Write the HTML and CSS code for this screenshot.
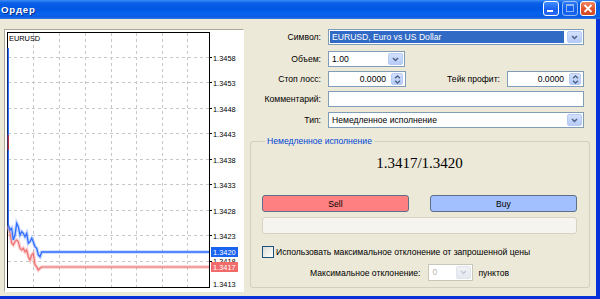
FILE: index.html
```html
<!DOCTYPE html>
<html lang="ru">
<head>
  <meta charset="UTF-8">
  <title>Ордер</title>
  <link rel="stylesheet" href="styles.css">
</head>
<body>
  <div class="window">
    <!-- Title bar -->
    <div class="titlebar">
      <span class="title">Ордер</span>
      <div class="caption-buttons">
        <span class="cap-btn">
          <svg width="14" height="13" viewBox="0 0 14 13"><rect x="3" y="8" width="6" height="2" fill="#fff"/></svg>
        </span>
        <span class="cap-btn disabled">
          <svg width="14" height="13" viewBox="0 0 14 13"><rect x="3.5" y="2.5" width="7" height="7" fill="none" stroke="#fff"/><rect x="3" y="2" width="8" height="2" fill="#fff"/></svg>
        </span>
        <span class="cap-btn close">
          <svg width="14" height="13" viewBox="0 0 14 13"><path d="M3.5 3l7 7M10.5 3l-7 7" stroke="#fff" stroke-width="1.8"/></svg>
        </span>
      </div>
    </div>

    <div class="client">
      <!-- Tick chart -->
      <div class="chart-panel">
        <svg class="chart" width="238" height="261" viewBox="0 0 238 261">
          <g fill="none" stroke="#c8c8c8" stroke-dasharray="3 3">
            <path d="M3 27.5H204M3 52.5H204M3 78.5H204M3 103.5H204M3 129.5H204M3 154.5H204M3 180.5H204M3 205.5H204M3 231.5H204"/>
            <path d="M28.5 3V257M54.5 3V257M80.5 3V257M106.5 3V257M131.5 3V257M157.5 3V257M182.5 3V257"/>
          </g>
          <rect x="2.5" y="2.5" width="202" height="255" fill="none" stroke="#000"/>
          <path d="M204 27.5h3M204 52.5h3M204 78.5h3M204 103.5h3M204 129.5h3M204 154.5h3M204 180.5h3M204 205.5h3M204 231.5h3" stroke="#000"/>

          <text class="symbol" x="4" y="11">EURUSD</text>

          <g class="axis">
            <text x="208" y="30.5">1.3458</text>
            <text x="208" y="55.5">1.3453</text>
            <text x="208" y="81.5">1.3448</text>
            <text x="208" y="106.5">1.3443</text>
            <text x="208" y="132.5">1.3438</text>
            <text x="208" y="157.5">1.3433</text>
            <text x="208" y="183.5">1.3428</text>
            <text x="208" y="208.5">1.3423</text>
            <text x="208" y="233.5">1.3418</text>
            <text x="208" y="257">1.3413</text>
          </g>

          <!-- ask / bid history -->
          <path d="M3.3 18V195" stroke="#2f6fff" stroke-width="1.4"/>
          <path d="M3.3 105V120" stroke="#b0304a" stroke-width="1.4"/>
          <path d="M3.3 196.7L5 203.3L6.7 213.3L8.3 215L10 211.7L11.7 210L13.3 211.7L15 218.3L16.7 220L18.3 218.3L20 221.7L21.7 220L23.3 226.7L25 230L26.7 225L28.3 223.3L30 235L31.7 236.7L33.3 240L35 238.3L36.7 237H204" fill="none" stroke="#f4a0a0" stroke-width="3.5" stroke-opacity=".5"/>
          <path d="M3.3 196.7L5 203.3L6.7 213.3L8.3 215L10 211.7L11.7 210L13.3 211.7L15 218.3L16.7 220L18.3 218.3L20 221.7L21.7 220L23.3 226.7L25 230L26.7 225L28.3 223.3L30 235L31.7 236.7L33.3 240L35 238.3L36.7 237H204" fill="none" stroke="#f07070" stroke-width="1.2"/>
          <path d="M3.3 195L5 200L6.7 198.3L8.3 210L10 205L11.7 193.3L13.3 196.7L15 205L16.7 201.7L18.3 203.3L20 206.7L21.7 203.3L23.3 213.3L25 211.7L26.7 208.3L28.3 211.7L30 216.7L31.7 218.3L33.3 225L35 226.7L36.7 222H204" fill="none" stroke="#90b0ff" stroke-width="3.5" stroke-opacity=".5"/>
          <path d="M3.3 195L5 200L6.7 198.3L8.3 210L10 205L11.7 193.3L13.3 196.7L15 205L16.7 201.7L18.3 203.3L20 206.7L21.7 203.3L23.3 213.3L25 211.7L26.7 208.3L28.3 211.7L30 216.7L31.7 218.3L33.3 225L35 226.7L36.7 222H204" fill="none" stroke="#2f6fff" stroke-width="1.3"/>

          <rect x="206" y="217" width="27" height="10" fill="#1a62f0"/>
          <text class="tag" x="208" y="225">1.3420</text>
          <rect x="206" y="232" width="27" height="10" fill="#f26b6b"/>
          <text class="tag" x="208" y="240">1.3417</text>
        </svg>
      </div>

      <!-- Order form -->
      <div class="order-panel">
        <div class="form">
          <div class="row row-symbol">
            <label>Символ:</label>
            <div class="combo wide selected">
              <span class="value">EURUSD, Euro vs US Dollar</span>
              <span class="drop"><svg width="7" height="5" viewBox="0 0 7 5"><path d="M1 1l2.5 2.5L6 1" fill="none" stroke="#4d6185" stroke-width="1.5"/></svg></span>
            </div>
          </div>
          <div class="row">
            <label>Объем:</label>
            <div class="combo volume">
              <span class="value">1.00</span>
              <span class="drop"><svg width="7" height="5" viewBox="0 0 7 5"><path d="M1 1l2.5 2.5L6 1" fill="none" stroke="#4d6185" stroke-width="1.5"/></svg></span>
            </div>
          </div>
          <div class="row">
            <label>Стоп лосс:</label>
            <div class="spin stop">
              <span class="value">0.0000</span>
              <span class="spin-btn">
                <svg width="7" height="4" viewBox="0 0 7 4"><path d="M1 3.3l2.5-2.3L6 3.3" fill="none" stroke="#4d6185" stroke-width="1.3"/></svg>
                <svg width="7" height="4" viewBox="0 0 7 4"><path d="M1 .7l2.5 2.3L6 .7" fill="none" stroke="#4d6185" stroke-width="1.3"/></svg>
              </span>
            </div>
            <label class="take-label">Тейк профит:</label>
            <div class="spin take">
              <span class="value">0.0000</span>
              <span class="spin-btn">
                <svg width="7" height="4" viewBox="0 0 7 4"><path d="M1 3.3l2.5-2.3L6 3.3" fill="none" stroke="#4d6185" stroke-width="1.3"/></svg>
                <svg width="7" height="4" viewBox="0 0 7 4"><path d="M1 .7l2.5 2.3L6 .7" fill="none" stroke="#4d6185" stroke-width="1.3"/></svg>
              </span>
            </div>
          </div>
          <div class="row row-comment">
            <label>Комментарий:</label>
            <div class="textbox wide"></div>
          </div>
          <div class="row">
            <label>Тип:</label>
            <div class="combo wide">
              <span class="value">Немедленное исполнение</span>
              <span class="drop"><svg width="7" height="5" viewBox="0 0 7 5"><path d="M1 1l2.5 2.5L6 1" fill="none" stroke="#4d6185" stroke-width="1.5"/></svg></span>
            </div>
          </div>
        </div>

        <fieldset class="group">
          <legend>Немедленное исполнение</legend>
          <div class="price">1.3417/1.3420</div>
          <div class="trade-buttons">
            <button class="sell">Sell</button>
            <button class="buy">Buy</button>
          </div>
          <div class="status"></div>
          <div class="check-row">
            <span class="checkbox"></span>
            <span>Использовать максимальное отклонение от запрошенной цены</span>
          </div>
          <div class="deviation-row">
            <span>Максимальное отклонение:</span>
            <div class="combo disabled">
              <span class="value">0</span>
              <span class="drop"><svg width="7" height="5" viewBox="0 0 7 5"><path d="M1 1l2.5 2.5L6 1" fill="none" stroke="#c3c8d2" stroke-width="1.5"/></svg></span>
            </div>
            <span>пунктов</span>
          </div>
        </fieldset>
      </div>
    </div>
  </div>
</body>
</html>
```

FILE: styles.css
```css
/* Reset */
* {
  margin: 0;
  padding: 0;
  box-sizing: border-box;
}

body {
  font-family: 'Liberation Sans', Arial, sans-serif;
  font-size: 8.6px;
  color: #000;
  background: #ece9d8;
}

/* Window frame */
.window {
  width: 600px;
  height: 299px;
  display: flex;
  flex-direction: column;
  background: #0831d9;
}

.titlebar {
  height: 19px;
  display: flex;
  justify-content: space-between;
  align-items: flex-start;
  background: linear-gradient(#3a8cf6 0, #0a5fe6 3px, #0058e4 9px, #0663ee 14px, #0a5ae0 17px, #2b6fe6 18px, #2b6fe6 19px);
}

.title {
  color: #fff;
  font-weight: bold;
  font-size: 9.6px;
  letter-spacing: 0.9px;
  line-height: 19px;
  padding-left: 1px;
  text-shadow: 1px 1px 0 #0a2a8a;
}

.caption-buttons {
  display: flex;
  gap: 2px;
  margin: 1px 4px 0 0;
}

.cap-btn {
  width: 16px;
  height: 15px;
  border: 1px solid #fff;
  border-radius: 3px;
  background: linear-gradient(#3f8dff, #1a5ff0 60%, #2a6af4);
  display: flex;
  align-items: center;
  justify-content: center;
}

.cap-btn:first-child {
  margin-right: 1px;
}

.cap-btn.disabled {
  opacity: 0.55;
}

.cap-btn.close {
  background: linear-gradient(#f08a68, #e0522c 55%, #d24a22);
}

/* Client area */
.client {
  flex: 1;
  display: flex;
  background: #ece9d8;
  margin: 0 4px 3px 0;
}

/* Chart */
.chart-panel {
  width: 240px;
  height: 263px;
  margin: 10px 0 0 4px;
  border: 1px solid;
  border-color: #aca899 #fff #fff #aca899;
  background: #fff;
}

.chart {
  display: block;
  font-family: 'Liberation Sans', Arial, sans-serif;
  font-size: 7.4px;
}

.chart .tag {
  fill: #fff;
}

/* Order panel */
.order-panel {
  width: 340px;
  margin-left: 6px;
  padding-top: 10px;
}

.form {
  width: 334px;
  display: flex;
  flex-direction: column;
  gap: 4px;
}

.row {
  display: flex;
  align-items: center;
  height: 16px;
}

.row-symbol {
  margin-bottom: 2px;
}

.row-comment {
  margin-bottom: 1px;
}

.row label {
  width: 71px;
  margin-right: 7px;
  text-align: right;
}

.row .take-label {
  flex: 1;
  width: auto;
}

/* Inputs */
.combo,
.spin,
.textbox {
  height: 16px;
  display: flex;
  border: 1px solid #7f9db9;
  background: #fff;
}

.wide {
  width: 256px;
}

.combo.volume {
  width: 77px;
}

.spin.stop {
  width: 78px;
}

.spin.take {
  width: 77px;
}

.combo .value,
.spin .value {
  flex: 1;
  padding: 0 3px;
  line-height: 14px;
  white-space: nowrap;
  overflow: hidden;
}

.combo.selected .value {
  margin: 1px 2px 1px 1px;
  padding: 0 2px;
  line-height: 12px;
  background: #316ac5;
  color: #fff;
}

.drop {
  width: 15px;
  margin: 1px;
  border: 1px solid #b8cbf4;
  border-radius: 2px;
  background: linear-gradient(#d2e0fd, #b6cbf6);
  display: flex;
  align-items: center;
  justify-content: center;
}

.spin .value {
  text-align: right;
  padding-right: 5px;
}

.spin-btn {
  width: 12px;
  margin: 1px 2px 1px 0;
  border: 1px solid #b8cbf4;
  border-radius: 2px;
  background: linear-gradient(#d2e0fd, #b6cbf6);
  display: flex;
  flex-direction: column;
  align-items: center;
  justify-content: center;
  gap: 1px;
}

.combo.disabled {
  width: 45px;
  border-color: #c9c7ba;
  color: #b8b6ab;
}

.combo.disabled .drop {
  border-color: #e1e4ea;
  background: linear-gradient(#f0f2f6, #e4e8ef);
}

/* Group box */
.group {
  width: 340px;
  margin-top: 8px;
  padding: 0 12px 6px 11px;
  border: 1px solid #d0d0bf;
  border-radius: 3px;
}

.group legend {
  margin-left: 3px;
  padding: 0 2px;
  color: #0046d5;
  line-height: 10px;
}

.price {
  margin-top: 8px;
  height: 18px;
  line-height: 18px;
  text-align: center;
  font-family: 'Liberation Serif', 'Times New Roman', serif;
  font-size: 15px;
}

.trade-buttons {
  display: grid;
  grid-template-columns: 147px 147px;
  justify-content: space-between;
  margin-top: 23px;
}

.trade-buttons button {
  height: 17px;
  border: 1px solid #5f6f8a;
  border-radius: 3px;
  font-family: inherit;
  font-size: 8.6px;
  color: #000;
}

.sell {
  background: #ff8080;
}

.buy {
  background: #a2c0fd;
}

.status {
  height: 17px;
  margin-top: 5px;
  border: 1px solid #d6d3c4;
  border-radius: 3px;
  background: #f5f4ee;
}

.check-row {
  display: flex;
  align-items: center;
  gap: 2px;
  height: 12px;
  margin-top: 12px;
}

.checkbox {
  width: 12px;
  height: 12px;
  border: 1px solid #1c5180;
  background: linear-gradient(135deg, #dcdcd6, #fff);
}

.deviation-row {
  display: flex;
  align-items: center;
  height: 17px;
  margin-top: 6px;
  padding-left: 48px;
}

.deviation-row .combo {
  height: 17px;
  margin: 0 5px 0 8px;
}
```
